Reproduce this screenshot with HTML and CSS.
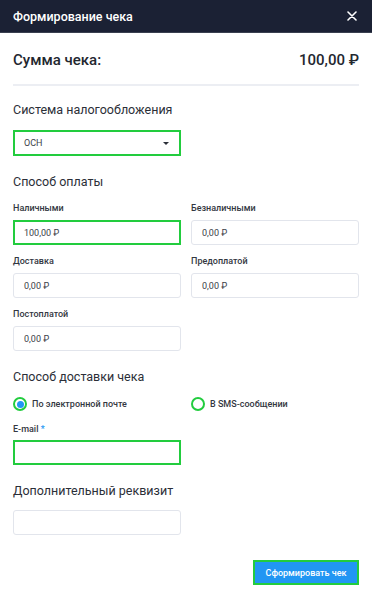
FILE: index.html
```html
<!DOCTYPE html>
<html lang="ru">
<head>
    <meta charset="UTF-8">
    <meta name="viewport" content="width=device-width, initial-scale=1.0">
    <title>Формирование чека</title>
    <link rel="stylesheet" href="styles.css">
</head>
<body>
    <div class="modal">
        <div class="modal-header">
            <span class="modal-title">Формирование чека</span>
            <svg class="close-icon" width="10" height="10" viewBox="0 0 10 10">
                <path d="M1 1L9 9M9 1L1 9" stroke="#ffffff" stroke-width="1.6" stroke-linecap="round"/>
            </svg>
        </div>

        <div class="modal-body">
            <div class="sum-row">
                <span>Сумма чека:</span>
                <span>100,00 ₽</span>
            </div>
            <div class="divider"></div>

            <div class="section-title first">Система налогообложения</div>
            <div class="select active">
                <span>ОСН</span>
                <span class="caret"></span>
            </div>

            <div class="section-title">Способ оплаты</div>
            <div class="fields">
                <div class="field">
                    <div class="field-label">Наличными</div>
                    <div class="input active">100,00 ₽</div>
                </div>
                <div class="field">
                    <div class="field-label">Безналичными</div>
                    <div class="input">0,00 ₽</div>
                </div>
                <div class="field">
                    <div class="field-label">Доставка</div>
                    <div class="input">0,00 ₽</div>
                </div>
                <div class="field">
                    <div class="field-label">Предоплатой</div>
                    <div class="input">0,00 ₽</div>
                </div>
                <div class="field">
                    <div class="field-label">Постоплатой</div>
                    <div class="input">0,00 ₽</div>
                </div>
            </div>

            <div class="section-title">Способ доставки чека</div>
            <div class="radios">
                <label class="radio checked"><span class="radio-circle"></span>По электронной почте</label>
                <label class="radio"><span class="radio-circle"></span>В SMS-сообщении</label>
            </div>
            <div class="field email-field">
                <div class="field-label">E-mail <span class="required">*</span></div>
                <div class="input active half"></div>
            </div>

            <div class="section-title">Дополнительный реквизит</div>
            <div class="input half extra"></div>

            <div class="actions">
                <button class="submit-btn">Сформировать чек</button>
            </div>
        </div>
    </div>
</body>
</html>
```

FILE: styles.css
```css
body {
    margin: 0;
    font-family: Roboto, "Noto Sans", Arial, sans-serif;
    background: #ffffff;
    color: #2b2f38;
}
.modal {
    width: 372px;
    height: 598px;
    background: white;
}
.modal-header {
    height: 33px;
    background: #1b2134;
    border-bottom: 1px solid #3a4050;
    box-sizing: border-box;
    display: flex;
    align-items: center;
    justify-content: space-between;
    padding: 0 15px 0 13px;
}
.modal-title {
    color: #ffffff;
    font-size: 12.5px;
    font-weight: 500;
}
.modal-body {
    padding: 0 13px;
}
.sum-row {
    display: flex;
    justify-content: space-between;
    margin-top: 17px;
    line-height: 20px;
    font-size: 15px;
    font-weight: 500;
    color: #23272f;
}
.divider {
    margin-top: 14px;
    height: 2px;
    background: #eceef3;
}
.section-title {
    margin-top: 17px;
    font-size: 12.5px;
    line-height: 18px;
    color: #2b2f38;
}
.section-title.first {
    margin-top: 15px;
}
.select {
    margin-top: 11px;
    width: 168px;
    height: 26px;
    box-sizing: border-box;
    border: 1px solid #e2e5ec;
    border-radius: 3px;
    display: flex;
    align-items: center;
    justify-content: space-between;
    padding: 0 10px 0 10px;
    font-size: 9px;
    color: #3a3e48;
}
.caret {
    width: 0;
    height: 0;
    border-left: 3px solid transparent;
    border-right: 3px solid transparent;
    border-top: 3.5px solid #2b2f38;
}
.active {
    border: 2px solid #22cc3e;
    border-radius: 0;
}
.select.active {
    padding-left: 9px;
}
.fields {
    margin-top: 11px;
    display: grid;
    grid-template-columns: 168px 168px;
    column-gap: 10px;
    row-gap: 10px;
}
.field-label {
    font-size: 9px;
    line-height: 12px;
    font-weight: 500;
    color: #333741;
    margin-bottom: 6px;
}
.input {
    height: 25px;
    box-sizing: border-box;
    border: 1px solid #e2e5ec;
    border-radius: 3px;
    padding: 0 10px;
    display: flex;
    align-items: center;
    font-size: 9px;
    color: #3a3e48;
}
.input.active {
    border: 2px solid #22cc3e;
    border-radius: 0;
    padding-left: 9px;
}
.half {
    width: 168px;
}
.radios {
    margin-top: 11px;
    display: grid;
    grid-template-columns: 178px 168px;
}
.radio {
    display: flex;
    align-items: center;
    gap: 5px;
    font-size: 9px;
    line-height: 14px;
    font-weight: 500;
    color: #333741;
}
.radio-circle {
    width: 14px;
    height: 14px;
    box-sizing: border-box;
    border: 2px solid #22cc3e;
    border-radius: 50%;
    display: flex;
    align-items: center;
    justify-content: center;
}
.radio.checked .radio-circle::after {
    content: "";
    width: 7px;
    height: 7px;
    border-radius: 50%;
    background: #2196f3;
}
.email-field {
    margin-top: 12px;
}
.email-field .field-label {
    margin-bottom: 5px;
}
.required {
    color: #2196f3;
}
.extra {
    margin-top: 10px;
}
.actions {
    margin-top: 25px;
    display: flex;
    justify-content: flex-end;
}
.submit-btn {
    width: 106px;
    height: 25px;
    background: #2196f3;
    color: white;
    border: 2px solid #22cc3e;
    font-family: Roboto, "Noto Sans", Arial, sans-serif;
    font-size: 9px;
    font-weight: 500;
    padding: 0;
    cursor: pointer;
}
```
